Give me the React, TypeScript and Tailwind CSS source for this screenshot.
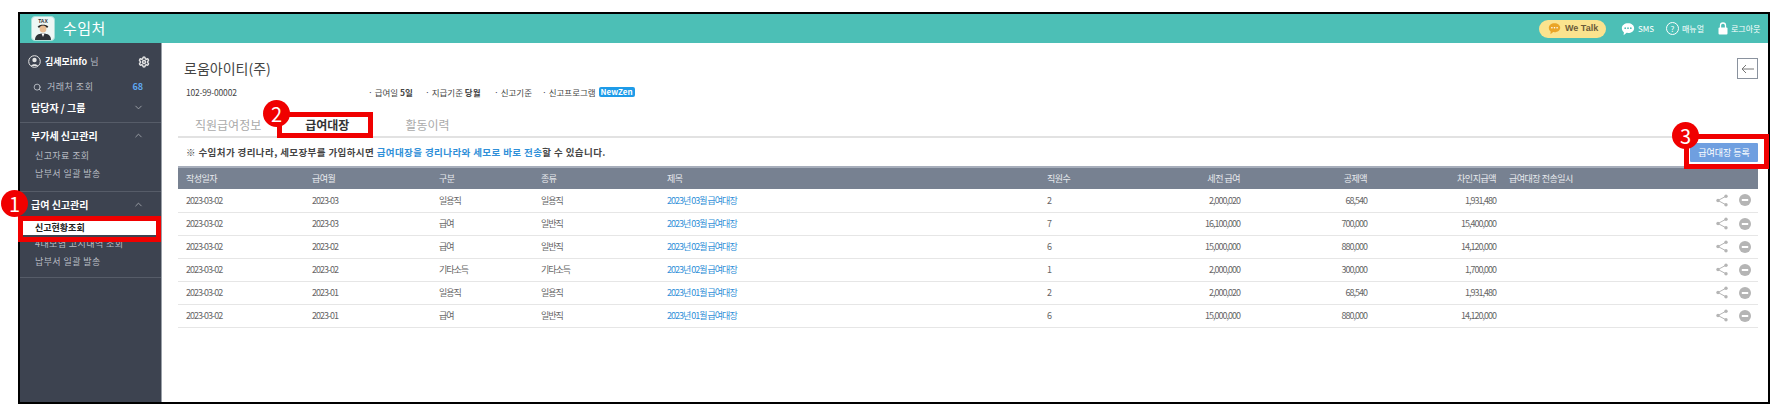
import { ChevronDown, ChevronUp, Search, Settings } from "lucide-react";

const rows = [
  ["2023-03-02", "2023-03", "일용직", "일용직", "2023년 03월 급여대장", "2", "2,000,020", "68,540", "1,931,480"],
  ["2023-03-02", "2023-03", "급여", "일반직", "2023년 03월 급여대장", "7", "16,100,000", "700,000", "15,400,000"],
  ["2023-03-02", "2023-02", "급여", "일반직", "2023년 02월 급여대장", "6", "15,000,000", "880,000", "14,120,000"],
  ["2023-03-02", "2023-02", "기타소득", "기타소득", "2023년 02월 급여대장", "1", "2,000,000", "300,000", "1,700,000"],
  ["2023-03-02", "2023-01", "일용직", "일용직", "2023년 01월 급여대장", "2", "2,000,020", "68,540", "1,931,480"],
  ["2023-03-02", "2023-01", "급여", "일반직", "2023년 01월 급여대장", "6", "15,000,000", "880,000", "14,120,000"],
];

function Badge({ n, className }: { n: string; className: string }) {
  return (
    <div className={`absolute z-20 flex h-[27px] w-[27px] items-center justify-center rounded-full bg-[#f00000] text-[20px] leading-none text-white ${className}`}>
      {n}
    </div>
  );
}

function ChatIcon({ fill, dot, size }: { fill: string; dot: string; size: number }) {
  return (
    <svg width={size} height={size} viewBox="0 0 16 16">
      <path d="M8 1.5c4 0 7 2.4 7 5.5s-3 5.5-7 5.5c-.6 0-1.1 0-1.6-.1L3 15l.3-3.4C1.900 10.600 1 9 1 7c0-3.100 3-5.500 7-5.500z" fill={fill} />
      <circle cx="4.800" cy="7" r="1" fill={dot} />
      <circle cx="8" cy="7" r="1" fill={dot} />
      <circle cx="11.200" cy="7" r="1" fill={dot} />
    </svg>
  );
}

function ShareIcon() {
  return (
    <svg width="12" height="13" viewBox="0 0 12 13" fill="#b5b5b5">
      <circle cx="10" cy="2.200" r="1.700" />
      <circle cx="2" cy="6.500" r="1.700" />
      <circle cx="10" cy="10.800" r="1.700" />
      <path d="M10 2.200 2 6.500l8 4.300" fill="none" stroke="#b5b5b5" strokeWidth="1" />
    </svg>
  );
}

function MinusIcon() {
  return (
    <svg width="12" height="12" viewBox="0 0 12 12">
      <circle cx="6" cy="6" r="6" fill="#b5b5b5" />
      <rect x="2.800" y="5" width="6.400" height="2" fill="#fff" />
    </svg>
  );
}

function Logo() {
  return (
    <div className="flex h-[25px] w-[24px] flex-col items-center justify-end overflow-hidden rounded-[4px] border border-[#a8e0da] bg-[#eef7f5]">
      <svg width="20" height="23" viewBox="0 0 20 23">
        <text x="10" y="6" textAnchor="middle" fontSize="5" fontWeight="700" fill="#333" fontFamily="Liberation Sans, sans-serif">TAX</text>
        <path d="M5 9.500c1-2.500 9-2.500 10 0v1H5z" fill="#222" />
        <circle cx="10" cy="12" r="3.400" fill="#e9bd93" />
        <path d="M2 23c0-4.500 3-6.500 8-6.500s8 2 8 6.500z" fill="#2f3338" />
        <path d="M8.500 16.500h3L10 20z" fill="#fff" />
      </svg>
    </div>
  );
}

export default function App() {
  return (
    <div className="h-[410px] w-[1776px] bg-white pl-[18px] pt-3 [font-family:'Noto_Sans_CJK_KR','Noto_Sans',sans-serif]">
      <div className="relative flex h-[392px] w-[1752px] flex-col border-2 border-black">
        <header className="flex h-[29px] shrink-0 items-center bg-[#4cbfb6] pl-[11px] pr-[8px] text-white">
          <Logo />
          <span className="ml-[8px] text-[15px] tracking-[0.5px]">수임처</span>
          <div className="ml-auto flex items-center whitespace-nowrap">
            <div className="flex h-[18px] w-[67px] items-center gap-1 rounded-full bg-[#fbe38e] pl-[9px] text-[9px] font-bold text-[#6b5b3a]">
              <ChatIcon fill="#eaa527" dot="#fff" size={13} />
              <span className="[font-family:'Liberation_Sans',sans-serif]">We Talk</span>
            </div>
            <div className="ml-[15px] flex items-center gap-[3px] text-[8px]">
              <ChatIcon fill="#fff" dot="#4cbfb6" size={14} />
              <span className="w-[17px]">SMS</span>
            </div>
            <div className="ml-[11px] flex items-center gap-[3px] text-[8px]">
              <div className="flex h-[13px] w-[13px] items-center justify-center rounded-full border border-white text-[8px] leading-none">?</div>
              <span className="w-[21px]">매뉴얼</span>
            </div>
            <div className="ml-[15px] flex items-center gap-[3px] text-[8px]">
              <svg width="10" height="13" viewBox="0 0 10 13" fill="#fff">
                <path d="M2.500 6V3.500a2.500 2.500 0 0 1 5 0V6" fill="none" stroke="#fff" strokeWidth="1.300" />
                <rect x="0.500" y="5.500" width="9" height="7" rx="1" />
              </svg>
              <span className="w-[29px]">로그아웃</span>
            </div>
          </div>
        </header>

        <div className="flex min-h-0 flex-1">
          <aside className="w-[142px] shrink-0 border-r border-[#9aa0a8] bg-[#3d4350] text-[9px] text-[#b9bdc4]">
            <div className="flex h-[36px] items-center pl-[8px] pr-[11px] pt-[1px]">
              <svg width="13" height="13" viewBox="0 0 13 13" fill="none">
                <circle cx="6.500" cy="6.500" r="5.800" stroke="#e5e5e5" />
                <circle cx="6.500" cy="5" r="2.200" fill="#e5e5e5" />
                <path d="M3 11c.5-2.500 6.500-2.500 7 0z" fill="#e5e5e5" />
              </svg>
              <span className="ml-[4px] font-bold text-white">김세모info</span>
              <span className="ml-[3px]">님</span>
              <Settings size={12} strokeWidth={3} className="ml-auto text-[#e0e0e0]" />
            </div>
            <div className="flex h-[16px] items-center pl-[13px] pr-[18px]">
              <Search size={9} strokeWidth={2.500} />
              <span className="ml-[5px] tracking-[0.5px]">거래처 조회</span>
              <span className="ml-auto font-bold text-[#5fa8f0]">68</span>
            </div>
            <div className="flex h-[21px] items-center pl-[11px] pr-[17px] pt-[3px] text-[10px] font-bold text-white">
              담당자 / 그룹
              <ChevronDown size={11} className="ml-auto text-[#a0a4ab]" />
            </div>
            <div className="mt-[6px] border-t border-[#565c68]" />
            <div className="flex h-[24px] items-center pl-[11px] pr-[17px] text-[10px] font-bold text-white">
              부가세 신고관리
              <ChevronUp size={11} className="ml-auto text-[#a0a4ab]" />
            </div>
            <div className="flex h-[18px] items-center pl-[15px] tracking-[0.4px]">신고자료 조회</div>
            <div className="flex h-[18px] items-center pl-[15px] tracking-[0.4px]">납부서 일괄 발송</div>
            <div className="mt-[8px] border-t border-[#565c68]" />
            <div className="flex h-[24px] items-center pl-[11px] pr-[17px] text-[10px] font-bold text-white">
              급여 신고관리
              <ChevronUp size={11} className="ml-auto text-[#a0a4ab]" />
            </div>
            <div className="ml-[3px] mr-[5px] mt-[5px] flex h-[14px] items-center bg-white pl-[12px] font-bold text-[#222]">신고현황조회</div>
            <div className="flex h-[18px] items-center pl-[15px] tracking-[0.4px]">4대보험 고지내역 조회</div>
            <div className="flex h-[18px] items-center pl-[15px] tracking-[0.4px]">납부서 일괄 발송</div>
            <div className="mt-[6px] border-t border-[#565c68]" />
          </aside>

          <main className="min-w-0 flex-1 pl-[16px] pr-[10px] text-[#666]">
            <div className="flex h-[41px] justify-between pt-[15px]">
              <h1 className="pl-[6px] text-[14px] leading-[20px] text-[#444]">로움아이티(주)</h1>
              <div className="flex h-[21px] w-[21px] items-center justify-center border border-[#8a929e]">
                <svg width="14" height="10" viewBox="0 0 14 10" fill="none" stroke="#777">
                  <path d="M13 5H1M5 1 1 5l4 4" />
                </svg>
              </div>
            </div>
            <div className="flex h-[16px] items-center pl-[8px] text-[8.500px] text-[#444]">
              <span className="w-[182px] tracking-[-0.2px]">102-99-00002</span>
              <span className="w-[57px]">· 급여일 <b>5일</b></span>
              <span className="w-[69px]">· 지급기준 <b>당월</b></span>
              <span className="w-[48px]">· 신고기준</span>
              <span>· 신고프로그램</span>
              <span className="ml-[3px] rounded-[2px] bg-[#1e9be8] px-[2px] text-[8px] font-bold leading-[10px] text-white">NewZen</span>
            </div>
            <div className="mt-[14px] flex h-[24px] items-center border-b-2 border-[#e2e2e2] text-[12px] text-[#aaa]">
              <span className="ml-[17px]">직원급여정보</span>
              <span className="ml-[44px] font-bold text-[#333]">급여대장</span>
              <span className="ml-[56px]">활동이력</span>
            </div>
            <div className="flex h-[28px] items-center justify-between">
              <p className="pl-[8px] text-[9.500px] font-bold tracking-[0.4px] text-[#444]">
                ※ 수임처가 경리나라, 세모장부를 가입하시면 <span className="text-[#2f8fd8]">급여대장을 경리나라와 세모로 바로 전송</span>할 수 있습니다.
              </p>
              <button className="mt-[1px] h-[19px] w-[68px] rounded-[1px] bg-[#6f9fe0] text-[9px] text-white">급여대장 등록</button>
            </div>
            <table className="w-[1580px] table-fixed border-collapse text-[9px]">
              <colgroup>
                <col className="w-[126px]" />
                <col className="w-[127px]" />
                <col className="w-[102px]" />
                <col className="w-[126px]" />
                <col className="w-[380px]" />
                <col className="w-[81px]" />
                <col className="w-[128px]" />
                <col className="w-[127px]" />
                <col className="w-[129px]" />
                <col />
              </colgroup>
              <thead>
                <tr className="h-[22px] border-t-2 border-[#a7aebb] bg-[#778191] text-left font-normal tracking-[-0.5px] text-[#e8eaee]">
                  <th className="px-2 font-normal">작성일자</th>
                  <th className="px-2 font-normal">급여월</th>
                  <th className="px-2 font-normal">구분</th>
                  <th className="px-2 font-normal">종류</th>
                  <th className="px-2 font-normal">제목</th>
                  <th className="px-2 font-normal">직원수</th>
                  <th className="px-2 text-right font-normal">세전 급여</th>
                  <th className="px-2 text-right font-normal">공제액</th>
                  <th className="px-2 text-right font-normal">차인지급액</th>
                  <th className="pl-[5px] font-normal">급여대장 전송일시</th>
                </tr>
              </thead>
              <tbody>
                {rows.map((r, i) => (
                  <tr key={i} className="h-[23px] border-b border-[#e6e6e6] tracking-[-1px] text-[#666]">
                    <td className="px-2">{r[0]}</td>
                    <td className="px-2">{r[1]}</td>
                    <td className="px-2">{r[2]}</td>
                    <td className="px-2">{r[3]}</td>
                    <td className="px-2 text-[#2f8fd8]">{r[4]}</td>
                    <td className="px-2">{r[5]}</td>
                    <td className="px-2 text-right">{r[6]}</td>
                    <td className="px-2 text-right">{r[7]}</td>
                    <td className="px-2 text-right">{r[8]}</td>
                    <td className="pr-[7px]">
                      <div className="flex items-center justify-end gap-[11px]">
                        <ShareIcon />
                        <MinusIcon />
                      </div>
                    </td>
                  </tr>
                ))}
              </tbody>
            </table>
          </main>
        </div>

        {/* 빨간 표시 박스 */}
        <div className="absolute left-[-2px] top-[202px] z-10 h-[26px] w-[143px] border-[5px] border-[#f00000]" />
        <div className="absolute left-[257px] top-[98px] z-10 h-[26px] w-[96px] border-[5px] border-[#f00000]" />
        <div className="absolute left-[1664px] top-[120px] z-10 h-[35px] w-[85px] border-[5px] border-[#f00000]" />
        <Badge n="1" className="left-[-19px] top-[176px]" />
        <Badge n="2" className="left-[243px] top-[86px]" />
        <Badge n="3" className="left-[1652px] top-[108px]" />
      </div>
    </div>
  );
}
